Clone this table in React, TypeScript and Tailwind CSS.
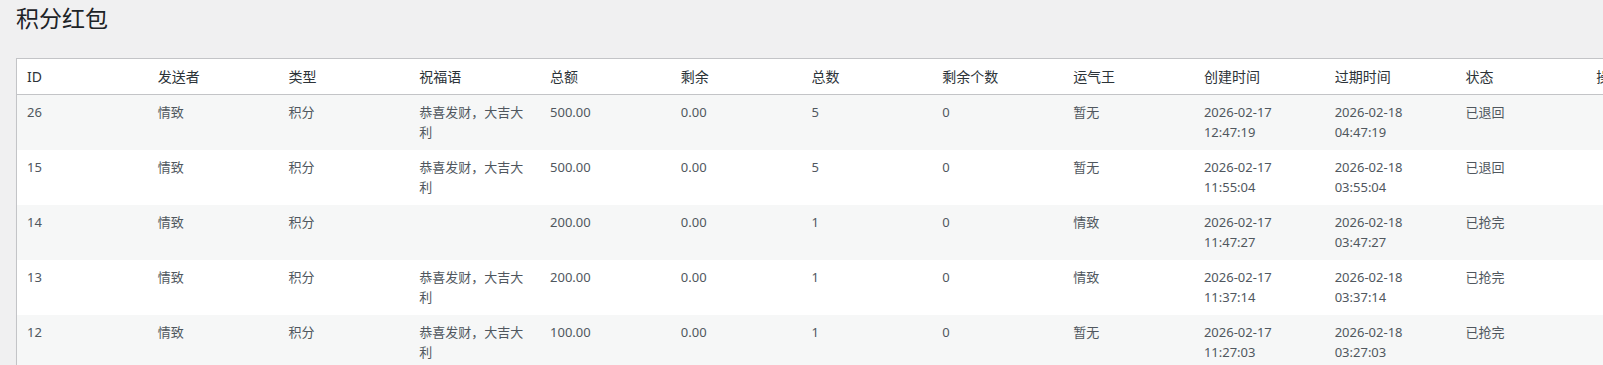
import React from "react";

const headers = ["ID", "发送者", "类型", "祝福语", "总额", "剩余", "总数", "剩余个数", "运气王", "创建时间", "过期时间", "状态", "操作"];

type Row = {
  id: string;
  sender: string;
  type: string;
  wish: string;
  total: string;
  remain: string;
  count: string;
  remainCount: string;
  king: string;
  created: [string, string];
  expires: [string, string];
  status: string;
};

const rows: Row[] = [
  { id: "26", sender: "情致", type: "积分", wish: "恭喜发财，大吉大利", total: "500.00", remain: "0.00", count: "5", remainCount: "0", king: "暂无", created: ["2026-02-17", "12:47:19"], expires: ["2026-02-18", "04:47:19"], status: "已退回" },
  { id: "15", sender: "情致", type: "积分", wish: "恭喜发财，大吉大利", total: "500.00", remain: "0.00", count: "5", remainCount: "0", king: "暂无", created: ["2026-02-17", "11:55:04"], expires: ["2026-02-18", "03:55:04"], status: "已退回" },
  { id: "14", sender: "情致", type: "积分", wish: "", total: "200.00", remain: "0.00", count: "1", remainCount: "0", king: "情致", created: ["2026-02-17", "11:47:27"], expires: ["2026-02-18", "03:47:27"], status: "已抢完" },
  { id: "13", sender: "情致", type: "积分", wish: "恭喜发财，大吉大利", total: "200.00", remain: "0.00", count: "1", remainCount: "0", king: "情致", created: ["2026-02-17", "11:37:14"], expires: ["2026-02-18", "03:37:14"], status: "已抢完" },
  { id: "12", sender: "情致", type: "积分", wish: "恭喜发财，大吉大利", total: "100.00", remain: "0.00", count: "1", remainCount: "0", king: "暂无", created: ["2026-02-17", "11:27:03"], expires: ["2026-02-18", "03:27:03"], status: "已抢完" },
];

const font = "font-['Noto_Sans','Noto_Sans_CJK_SC',sans-serif]";

export default function App() {
  return (
    <div className={`min-h-screen w-full overflow-hidden bg-[#f0f0f1] pl-4 ${font}`}>
      <h1 className="pt-1 text-[23px] leading-[1.3] font-normal text-[#1d2327]">积分红包</h1>
      <table className="mt-6 w-[1702px] table-fixed border-separate border-spacing-0 border border-[#c3c4c7] bg-white shadow-[0_1px_1px_rgba(0,0,0,0.04)]">
        <thead>
          <tr>
            {headers.map((h) => (
              <th
                key={h}
                className="border-b border-[#c3c4c7] px-[10px] py-2 text-left text-[14px] leading-[1.4] font-normal text-[#2c3338]"
              >
                {h}
              </th>
            ))}
          </tr>
        </thead>
        <tbody>
          {rows.map((r, i) => {
            const cells = [
              r.id,
              r.sender,
              r.type,
              r.wish,
              r.total,
              r.remain,
              r.count,
              r.remainCount,
              r.king,
              <>
                {r.created[0]}
                <br />
                {r.created[1]}
              </>,
              <>
                {r.expires[0]}
                <br />
                {r.expires[1]}
              </>,
              r.status,
              "",
            ];
            return (
              <tr key={r.id} className={i % 2 === 0 ? "bg-[#f6f7f7]" : "bg-white"}>
                {cells.map((c, j) => (
                  <td
                    key={j}
                    className="h-[55px] px-[10px] py-2 align-top text-[13px] leading-[19.5px] text-[#50575e] break-words"
                  >
                    {c}
                  </td>
                ))}
              </tr>
            );
          })}
        </tbody>
      </table>
    </div>
  );
}
